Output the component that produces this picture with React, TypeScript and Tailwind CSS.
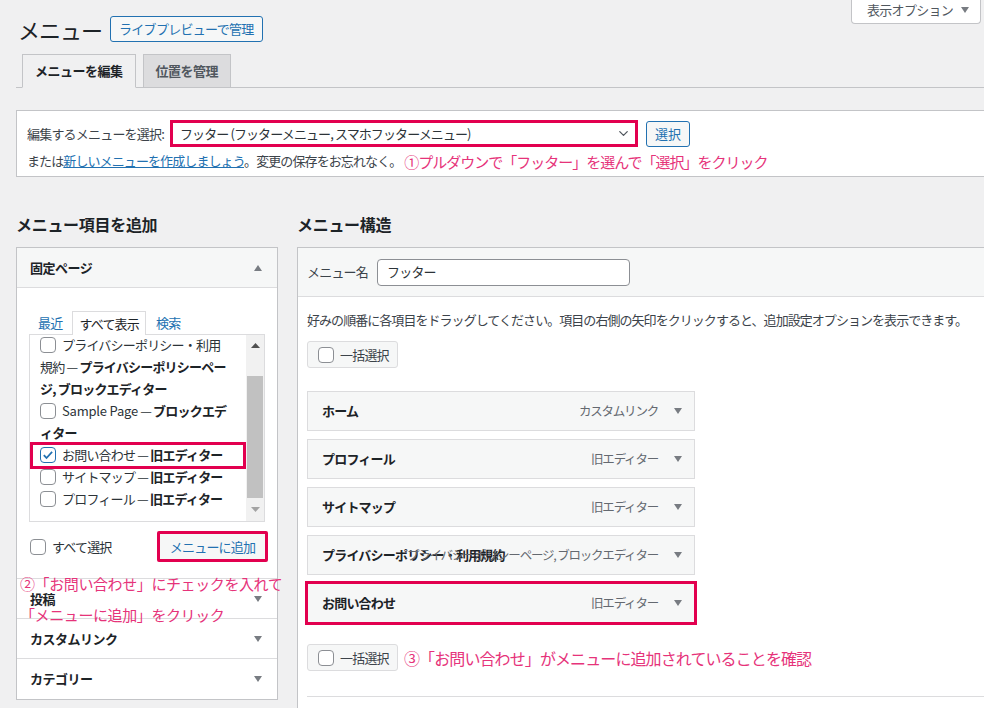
import React from 'react';
import { ChevronDown } from 'lucide-react';

function Checkbox({ checked = false }: { checked?: boolean }) {
  return (
    <span
      className={`inline-flex h-4 w-4 shrink-0 items-center justify-center rounded-[4px] border bg-white ${
        checked ? 'border-[#2271b1]' : 'border-[#8c8f94]'
      }`}
    >
      {checked && (
        <svg viewBox="0 0 16 16" className="h-[14px] w-[14px]">
          <path d="M3.2 8.2l3.1 3.2 6.4-7" fill="none" stroke="#2271b1" strokeWidth="2" />
        </svg>
      )}
    </span>
  );
}

function Caret({ up = false }: { up?: boolean }) {
  return (
    <svg width="8" height="6" viewBox="0 0 8 6" className="shrink-0">
      <polygon points={up ? '0,6 8,6 4,0' : '0,0 8,0 4,6'} fill="#787c82" />
    </svg>
  );
}

const menuItems = [
  { title: 'ホーム', meta: 'カスタムリンク' },
  { title: 'プロフィール', meta: '旧エディター' },
  { title: 'サイトマップ', meta: '旧エディター' },
  { title: 'プライバシーポリシー・利用規約', meta: 'プライバシーポリシーページ, ブロックエディター' },
  { title: 'お問い合わせ', meta: '旧エディター', marked: true },
];

function App() {
  return (
    <div className="h-[708px] overflow-hidden bg-[#f0f0f1] font-['Noto_Sans_CJK_JP',sans-serif] text-[13px] text-[#3c434a]">
      {/* Title row + screen options */}
      <div className="flex items-start justify-between">
        <div className="flex items-center gap-[8px] pl-[18px] pt-[15px]">
          <h1 className="text-[22px] font-normal leading-[28px] tracking-[-1px] text-[#1d2327]">メニュー</h1>
          <button className="h-[26px] rounded-[3px] border border-[#2271b1] bg-[#f6f7f7] px-[8px] text-[13px] leading-[24px] tracking-[-0.7px] text-[#2271b1]">
            ライブプレビューで管理
          </button>
        </div>
        <button className="mr-[3px] flex h-[24px] w-[130px] items-center gap-[8px] rounded-b-[4px] border border-t-0 border-[#c3c4c7] bg-white pb-[4px] pl-[15px] text-[13px] tracking-[-0.7px] text-[#50575e]">
          表示オプション
          <Caret />
        </button>
      </div>

      {/* Tabs */}
      <div className="ml-[16px] mt-[11px] flex gap-[7px] border-b border-[#c3c4c7] pl-[6px]">
        <div className="-mb-px h-[34px] border border-[#c3c4c7] border-b-[#f0f0f1] bg-[#f0f0f1] px-[12px] font-bold leading-[32px] tracking-[-0.5px] text-[#1d2327]">
          メニューを編集
        </div>
        <div className="-mb-px h-[34px] border border-[#c3c4c7] bg-[#dcdcde] px-[12px] font-bold leading-[32px] tracking-[-0.5px] text-[#50575e]">
          位置を管理
        </div>
      </div>

      {/* Select menu box */}
      <div className="ml-[16px] mt-[22px] border border-r-0 border-[#c3c4c7] bg-white pb-[6px] pl-[10px] pt-[9px]">
        <div className="flex items-center">
          <span className="tracking-[-0.8px]">編集するメニューを選択:</span>
          <div className="ml-[6px] flex h-[27px] w-[468px] items-center justify-between border-[3px] border-[#e2004f] bg-white pl-[7px] pr-[4px] tracking-[-0.9px] text-[#2c3338]">
            フッター (フッターメニュー, スマホフッターメニュー)
            <ChevronDown size={15} strokeWidth={2} className="text-[#50575e]" />
          </div>
          <button className="ml-[8px] h-[26px] w-[44px] rounded-[3px] border border-[#2271b1] bg-[#f6f7f7] text-[13px] text-[#2271b1]">
            選択
          </button>
        </div>
        <div className="mt-[4px] flex items-baseline whitespace-nowrap leading-[18px] tracking-[-0.9px]">
          <span>
            または<span className="text-[#2271b1] underline">新しいメニューを作成しましょう</span>。変更の保存をお忘れなく。
          </span>
          <span className="ml-[3px] translate-y-[2px] text-[15px] tracking-[-1px] text-[#e6337a]">
            ①プルダウンで「フッター」を選んで「選択」をクリック
          </span>
        </div>
      </div>

      {/* Two columns */}
      <div className="mt-[35px] flex gap-[19px] pl-[16px]">
        {/* Left column */}
        <div className="w-[262px] shrink-0">
          <h2 className="mb-[11px] text-[16px] font-bold leading-[24px] tracking-[-0.3px] text-[#1d2327]">メニュー項目を追加</h2>
          <div className="relative border border-[#c3c4c7] bg-white">
            <div className="flex h-[40px] items-center justify-between border-b border-[#dcdcde] bg-[#f6f7f7] pl-[13px] pr-[15px] font-bold tracking-[-0.5px] text-[#1d2327]">
              固定ページ
              <Caret up />
            </div>
            <div className="border-b border-[#dcdcde] px-[12px] pb-[16px] pt-[23px]">
              <div className="flex items-end gap-[10px] pl-[9px] tracking-[-0.8px]">
                <span className="leading-[22px] text-[#2271b1]">最近</span>
                <span className="relative z-10 -mb-px h-[24px] border border-b-0 border-[#dcdcde] bg-white px-[6px] leading-[24px] text-[#1d2327]">
                  すべて表示
                </span>
                <span className="leading-[22px] text-[#2271b1]">検索</span>
              </div>
              <div className="flex h-[188px] border border-[#dcdcde]">
                <div className="-mt-[1px] flex-1 overflow-hidden whitespace-nowrap pl-[10px] tracking-[-0.8px] leading-[22px] text-[#2c3338]">
                  <div className="flex h-[22px] items-center gap-[6px]">
                    <Checkbox />
                    <span>プライバシーポリシー・利用</span>
                  </div>
                  <div>
                    規約 — <b className="text-[#1d2327]">プライバシーポリシーペー</b>
                  </div>
                  <div>
                    <b className="text-[#1d2327]">ジ, ブロックエディター</b>
                  </div>
                  <div className="flex h-[22px] items-center gap-[6px]">
                    <Checkbox />
                    <span>
                      <span className="tracking-[-0.2px]">Sample Page</span> — <b className="text-[#1d2327]">ブロックエデ</b>
                    </span>
                  </div>
                  <div>
                    <b className="text-[#1d2327]">ィター</b>
                  </div>
                  <div className="relative flex h-[22px] items-center gap-[6px]">
                    <span className="absolute -bottom-[3px] -left-[10px] -top-[2px] right-[0px] border-[3px] border-[#e2004f]" />
                    <Checkbox checked />
                    <span>
                      お問い合わせ — <b className="text-[#1d2327]">旧エディター</b>
                    </span>
                  </div>
                  <div className="flex h-[22px] items-center gap-[6px]">
                    <Checkbox />
                    <span>
                      サイトマップ — <b className="text-[#1d2327]">旧エディター</b>
                    </span>
                  </div>
                  <div className="flex h-[22px] items-center gap-[6px]">
                    <Checkbox />
                    <span>
                      プロフィール — <b className="text-[#1d2327]">旧エディター</b>
                    </span>
                  </div>
                </div>
                <div className="flex w-[18px] flex-col items-center bg-[#f1f1f1]">
                  <div className="mt-[8px]">
                    <svg width="9" height="5" viewBox="0 0 9 5">
                      <polygon points="0,5 9,5 4.5,0" fill="#505050" />
                    </svg>
                  </div>
                  <div className="mt-[28px] h-[122px] w-[16px] bg-[#c1c1c1]" />
                  <div className="mt-[9px]">
                    <svg width="9" height="5" viewBox="0 0 9 5">
                      <polygon points="0,0 9,0 4.5,5" fill="#a3a3a3" />
                    </svg>
                  </div>
                </div>
              </div>
              <div className="mt-[9px] flex items-center justify-between pl-[1px]">
                <label className="flex items-center gap-[6px] tracking-[-0.8px] text-[#2c3338]">
                  <Checkbox />
                  すべて選択
                </label>
                <button className="-mr-[3px] h-[31px] w-[111px] rounded-[2px] border-[3px] border-[#e2004f] bg-[#f6f7f7] tracking-[-0.8px] text-[#2271b1]">
                  メニューに追加
                </button>
              </div>
            </div>
            {['投稿', 'カスタムリンク', 'カテゴリー'].map((label, i) => (
              <div
                key={label}
                className={`flex h-[40px] items-center justify-between bg-white pl-[13px] pr-[15px] font-bold tracking-[-0.5px] text-[#1d2327] ${
                  i < 2 ? 'border-b border-[#dcdcde]' : ''
                }`}
              >
                {label}
                <Caret />
              </div>
            ))}
            {/* annotation 2 */}
            <div className="absolute left-[3px] top-[320px] whitespace-nowrap text-[15px] leading-[31px] tracking-[-0.4px] text-[#e6337a]">
              ②「お問い合わせ」にチェックを入れて
              <br />
              「メニューに追加」をクリック
            </div>
          </div>
        </div>

        {/* Right column */}
        <div className="min-w-[700px] flex-1">
          <h2 className="mb-[11px] text-[16px] font-bold leading-[24px] tracking-[-0.3px] text-[#1d2327]">メニュー構造</h2>
          <div className="h-[470px] border border-b-0 border-r-0 border-[#c3c4c7] bg-white">
            <div className="flex h-[49px] items-center gap-[9px] border-b border-[#dcdcde] bg-[#f6f7f7] pl-[9px] tracking-[-0.8px]">
              <span>メニュー名</span>
              <div className="flex h-[27px] w-[253px] items-center rounded-[4px] border border-[#8c8f94] bg-white pl-[9px] text-[#2c3338]">
                フッター
              </div>
            </div>
            <div className="pl-[9px] pt-[13px]">
              <p className="whitespace-nowrap leading-[20px] tracking-[-0.95px]">
                好みの順番に各項目をドラッグしてください。項目の右側の矢印をクリックすると、追加設定オプションを表示できます。
              </p>
              <div className="mt-[11px] flex h-[27px] w-[91px] items-center gap-[6px] rounded-[3px] border border-[#dcdcde] bg-[#f6f7f7] pl-[10px] tracking-[-0.8px]">
                <Checkbox />
                一括選択
              </div>
              <div className="mt-[23px] flex flex-col gap-[8px]">
                {menuItems.map((item) => (
                  <div
                    key={item.title}
                    className="relative flex h-[40px] w-[388px] items-center border border-[#dcdcde] bg-[#f6f7f7] pl-[14px] pr-[12px]"
                  >
                    {item.marked && (
                      <span className="absolute -inset-[3px] border-[3px] border-[#e2004f]" />
                    )}
                    <span className="min-w-0 flex-1 whitespace-nowrap font-bold tracking-[-0.8px] text-[#1d2327]">
                      {item.title}
                    </span>
                    <span className="shrink-0 whitespace-nowrap text-[12.5px] tracking-[-1.2px] text-[#646970]">
                      {item.meta}
                    </span>
                    <span className="ml-[16px]">
                      <Caret />
                    </span>
                  </div>
                ))}
              </div>
              <div className="mt-[21px] flex items-center">
                <div className="flex h-[27px] w-[91px] items-center gap-[6px] rounded-[3px] border border-[#dcdcde] bg-[#f6f7f7] pl-[10px] tracking-[-0.8px]">
                  <Checkbox />
                  一括選択
                </div>
                <span className="ml-[6px] whitespace-nowrap text-[16px] tracking-[-0.9px] text-[#e6337a]">
                  ③「お問い合わせ」がメニューに追加されていることを確認
                </span>
              </div>
              <div className="mt-[25px] border-t border-[#dcdcde]" />
            </div>
          </div>
        </div>
      </div>
    </div>
  );
}

export default App;
